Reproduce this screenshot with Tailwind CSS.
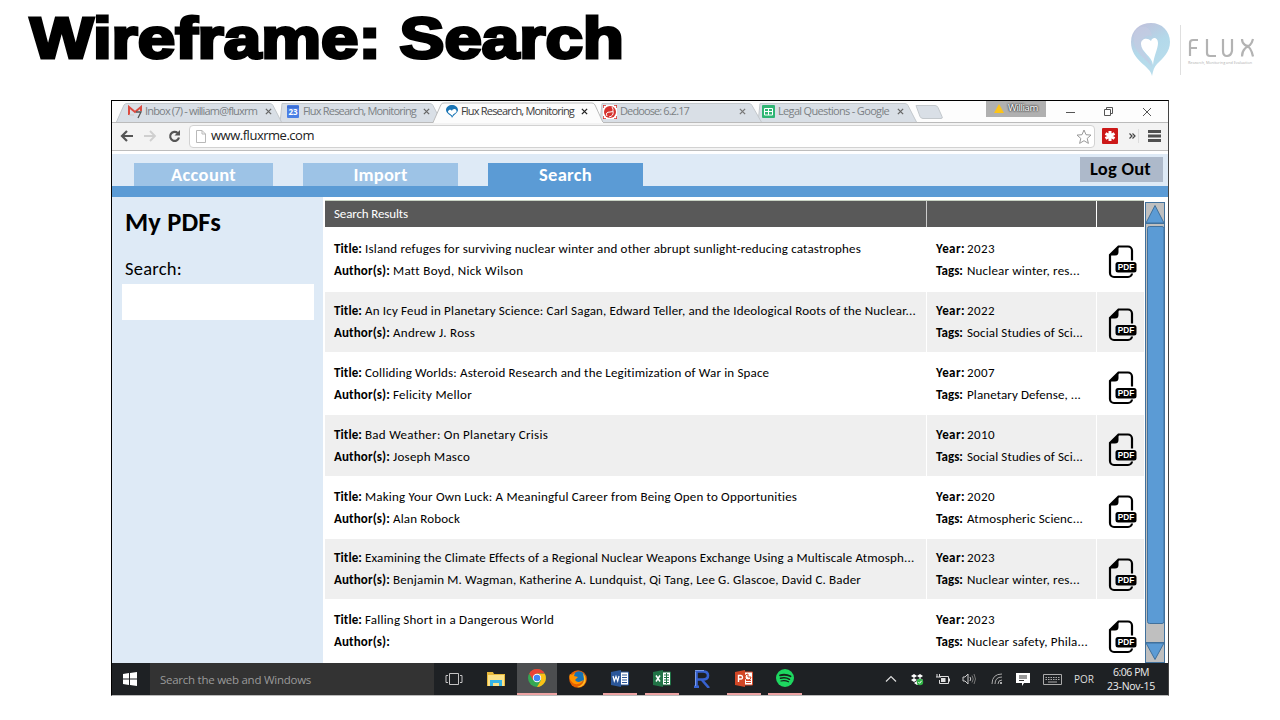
<!DOCTYPE html>
<html lang="en">
<head>
<meta charset="utf-8">
<title>Wireframe: Search</title>
<script src="https://cdn.jsdelivr.net/npm/@tailwindcss/browser@4"></script>
</head>
<body class="w-[1280px] h-[720px] overflow-hidden bg-white text-black font-[Carlito,Lato,sans-serif]">
<svg class="hidden">
  <symbol id="pdf" viewBox="0 0 30 34">
    <path d="M10.500 1.500H20a4 4 0 0 1 4 4V28a4 4 0 0 1-4 4H6a4 4 0 0 1-4-4V10z" fill="none" stroke="#000" stroke-width="2.200"/>
    <path d="M2 10.500L10.500 1.500V7a3.500 3.500 0 0 1-3.500 3.500z" fill="#000"/>
    <rect x="6.500" y="15.500" width="23" height="13" fill="var(--gap)"/>
    <rect x="7.500" y="17" width="21" height="10.500" rx="2.500" fill="#000"/>
    <text x="9.800" y="25.300" textLength="16.500" lengthAdjust="spacingAndGlyphs" font-family="Liberation Sans" font-weight="bold" font-size="8.500" fill="#fff">PDF</text>
  </symbol>
  <symbol id="x" viewBox="0 0 8 8"><path d="M1 1l6 6M7 1L1 7" stroke="currentColor" stroke-width="1.500"/></symbol>
</svg>

<header class="flex h-[100px] justify-between pl-[30px] pr-[24px]">
  <h1 class="h-20 w-[620px] origin-left scale-x-[1.17] text-[57.500px] leading-[77px] font-bold whitespace-nowrap font-['Liberation_Sans',sans-serif] [-webkit-text-stroke:3px_#000]">Wireframe: Search</h1>
  <div class="flex pt-[22px]">
    <svg width="126" height="56" viewBox="0 0 126 56">
      <defs><linearGradient id="lg" x1="0" y1="0" x2=".4" y2="1"><stop offset="0" stop-color="#c2bdd9"/><stop offset=".55" stop-color="#b3d9ea"/><stop offset="1" stop-color="#b9ddec"/></linearGradient></defs>
      <path d="M22 54C21 44 1 39 1 20 1 8 10 1 21 1s19 8 19 19c0 10-7 16-13 22-3 3-4 7-5 12z" fill="url(#lg)"/>
      <path d="M6 8C11 2 21 4 22 14c-5-2-10 1-11 8 0 8 9 13 11 23C17 37 5 32 4 20 3 15 4 11 6 8z" fill="#c5cbe2" opacity=".65"/>
      <path d="M23 43c-1-9-12-13-12-21 0-5 6-7 10-3 2-5 7-3 7 2 0 6-4 12-5 22z" fill="#fff"/>
      <path d="M50.500 3V53" stroke="#dfdfdf"/>
      <g fill="none" stroke="#b3b3b3" stroke-width="2.200"><path d="M60 34V21q0-3 3-3h5M60 26h7M77 17v14q0 3 3 3h6M93 17v12q0 5 4 5t5-5V17M112 17q0 4 3 6t5 0 3-6M112 34.500q0-5 3-8t5 0 3 8"/></g>
      <text x="58" y="41.500" textLength="64" font-family="Open Sans" font-size="3.800" fill="#b0b0b0">Research, Monitoring and Evaluation</text>
    </svg>
  </div>
</header>

<main class="ml-[111px] flex h-[596px] w-[1058px] flex-col border border-black border-r-[#444] border-b-[#bbb] bg-white">
  <!-- Browser tab strip -->
  <div class="relative h-[22px] shrink-0 text-[11px] text-[#7b7f84] font-['Open_Sans',sans-serif]">
    <svg class="absolute inset-0" width="1056" height="22">
      <rect width="1056" height="22" fill="#fdfdfd"/>
      <g fill="#d9dfe6" stroke="#c3c8cc" stroke-width="1">
        <path d="M646 22l2-19.500H793q2 0 3 2l9 17.500z"/>
        <path d="M488 22l2-19.500H637q2 0 3 2l10 17.500z"/>
        <path d="M168 22l2-19.500H318q2 0 3 2l9 17.500z"/>
        <path d="M4 22l8-18q1-1.500 3-1.500H158q2 0 3 2l9 17.500z"/>
        <path d="M804 4.500h19q2 0 3 2l4 9q1 2-1 2H811q-2 0-3-2z"/>
      </g>
      <path d="M0 21.500H321l8-18q1-1.500 3-1.500H480q2 0 3 2l8 17.500H1056" fill="#fcfcfc" stroke="#bbb"/>
      <path d="M322 22h169" stroke="#fcfcfc" stroke-width="2"/>
    </svg>
    <div class="relative flex h-[21px] items-center pl-4">
      <div class="flex w-[160px] items-center">
        <svg width="15" height="14" viewBox="0 0 15 14"><path d="M1 10V2l6 5 6-5v4" fill="none" stroke="#dc4b40" stroke-width="2"/><path d="M1 10h5" stroke="#c9c9c9"/><path d="M8 7h5l-3 6" fill="none" stroke="#555" stroke-width="1.300"/></svg>
        <span class="ml-0.5 w-[113px]"><span data-w="112">Inbox (7) - william@fluxrm</span></span>
        <svg class="ml-[7px] text-[#666]" width="7" height="7"><use href="#x"/></svg>
      </div>
      <div class="flex w-[158px] items-center">
        <svg class="-ml-px mr-px" width="12" height="13"><rect width="12" height="13" rx="1" fill="#4a7fe5"/><path d="M0 2h12" stroke="#2e5fc4"/><text x="1.500" y="10" font-size="8" font-weight="bold" font-family="Open Sans" textLength="9" fill="#fff">23</text></svg>
        <span class="ml-[3px] w-[113px]"><span data-w="113">Flux Research, Monitoring</span></span>
        <svg class="ml-[7px] text-[#666]" width="7" height="7"><use href="#x"/></svg>
      </div>
      <div class="flex w-[157px] items-center text-[#3b3b3b]">
        <svg width="12" height="13" viewBox="0 0 12 13"><path d="M6 13C6 10 0 9 0 5 0 2 3 0 6 0s6 2 6 5-5 5-6 8z" fill="#1a75b5"/><path d="M6.500 11C5 9 1.500 8 2 6.500 3 4 5 4.500 6 6c0-2 4-3 4.500 0C11 8 7 8 6.500 11z" fill="#fff"/></svg>
        <span class="ml-[3px] w-[113px]"><span data-w="113">Flux Research, Monitoring</span></span>
        <svg class="ml-[7px] text-[#222]" width="7" height="7"><use href="#x"/></svg>
      </div>
      <div class="flex w-[159px] items-center">
        <svg width="14" height="14" viewBox="0 0 14 14"><rect width="14" height="14" fill="#fff"/><circle cx="7" cy="7" r="6" fill="#d6322e"/><path d="M0 3V0h3M11 0h3v3M14 11v3h-3M3 14H0v-3" fill="none" stroke="#d6322e" stroke-width="1.500"/><path d="M4 11q-2-4 3-4T9 2M6 12q5-1 4-6" fill="none" stroke="#fff"/></svg>
        <span class="ml-[3px] w-[119px]"><span data-w="69">Dedoose: 6.2.17</span></span>
        <svg class="text-[#777]" width="7" height="7"><use href="#x"/></svg>
      </div>
      <div class="flex w-[224px] items-center">
        <svg width="13" height="13"><rect width="13" height="13" rx="1" fill="#2fb573"/><path d="M2.500 3.500h8v6.500h-8zM2.500 6.500h8M6.500 3.500v6.500" fill="none" stroke="#fff"/></svg>
        <span class="ml-[3px] w-[112px]"><span data-w="111">Legal Questions - Google</span></span>
        <svg class="ml-[7px] text-[#666]" width="7" height="7"><use href="#x"/></svg>
      </div>
      <div class="-mt-[6px] flex h-4 w-[60px] items-center bg-[#b0b0b0] pl-2 text-[9.500px] text-white [text-shadow:0_0_2px_#222,0_0_2px_#222]">
        <svg width="10" height="9"><path d="M5 0l5 9H0z" fill="#fcc419"/></svg>
        <span class="ml-1"><span data-w="30">William</span></span>
      </div>
      <svg class="ml-5" width="90" height="12" viewBox="0 0 90 12" fill="none" stroke="#555"><path d="M0 6.500h9M38.500 3.500h6v6h-6zM40.500 3.500v-2h6v6h-2M77 2l8 8M85 2l-8 8"/></svg>
    </div>
  </div>
  <!-- Address bar -->
  <div class="flex h-[28px] shrink-0 items-center border-b border-[#bdbdbd] bg-[#f3f3f3] pb-px pl-2">
    <svg width="62" height="14" viewBox="0 0 62 14" fill="none" stroke-width="2.200"><path d="M13 7H2M7 2L2 7l5 5" stroke="#555"/><path d="M24 7h11M30 2l5 5-5 5" stroke="#cfcfcf" stroke-width="1.800"/><path d="M59 8.500a4.500 4.500 0 1 1-1.300-4.500" stroke="#555"/><path d="M60 1v5.500h-5.500z" fill="#555"/></svg>
    <div class="ml-[7px] flex h-[23px] w-[906px] items-center rounded-sm border border-[#d2d2d2] bg-white pl-[6px]">
      <svg width="10" height="13" fill="none" stroke="#b9b9b9"><path d="M.5.5h5.500l3.500 3.500v8.500h-9zM6 .5V4h3.500"/></svg>
      <span class="ml-[5px] w-[865px] text-[13px] text-[#222] font-['Open_Sans',sans-serif]"><span data-w="103">www.fluxrme.com</span></span>
      <svg class="shrink-0" width="16" height="15" viewBox="0 0 16 15" fill="none" stroke="#999"><path d="M8 1l2 4.700 5 .4-3.800 3.300 1.200 5L8 11.700l-4.400 2.700 1.200-5L1 6.100l5-.4z"/></svg>
    </div>
    <svg class="ml-[7px]" width="62" height="16" viewBox="0 0 62 16"><rect width="16" height="16" rx="1" fill="#cc1818"/><path d="M8 3v10M3.500 5.500l9 5M12.500 5.500l-9 5" stroke="#fff" stroke-width="3"/><path d="M27.500 5.500L30 8l-2.500 2.500M30.500 5.500L33 8 30.500 10.500" fill="none" stroke="#444" stroke-width="1.200"/><path d="M36.500 1v14" stroke="#ddd"/><path d="M46 3.500h13M46 8h13M46 12.500h13" stroke="#505050" stroke-width="2.800"/></svg>
  </div>
  <!-- Site navigation -->
  <nav class="mt-[3px] flex h-[43px] shrink-0 items-start border-b-[11px] border-[#5b9bd5] bg-[#deeaf6] text-[18.500px] leading-[23px] font-bold text-white">
    <div class="mt-[9px] ml-[22px] h-[23px] w-[139px] bg-[#9dc3e6] text-center"><span data-w="65">Account</span></div>
    <div class="mt-[9px] ml-[30px] h-[23px] w-[155px] bg-[#9dc3e6] text-center"><span data-w="54">Import</span></div>
    <div class="mt-[9px] ml-[30px] h-[23px] w-[155px] bg-[#5b9bd5] text-center"><span data-w="53">Search</span></div>
    <div class="mt-[3px] ml-auto mr-[5px] h-[25px] w-[83px] bg-[#adb9ca] pr-0.5 text-center text-black"><span data-w="61">Log Out</span></div>
  </nav>
  <!-- Page body -->
  <div class="flex h-[466px] shrink-0">
    <aside class="w-[211px] bg-[#deeaf6] px-[10px]">
      <h2 class="ml-[3px] mt-[9px] h-8 text-[26.500px] leading-[32px] font-bold"><span data-w="96">My PDFs</span></h2>
      <p class="ml-[3px] mt-[20px] h-6 text-[18.500px] leading-[22px]"><span data-w="57">Search:</span></p>
      <div class="mt-[2px] h-9 w-[192px] bg-white"></div>
    </aside>
    <section class="ml-0.5 w-[819px] pt-[3px] text-[13px] leading-[22px]">
      <div class="grid h-[27px] grid-cols-[602px_170px_47px] border-t border-[#c9d3c4] bg-[#595959] text-white">
        <div class="border-r border-[#ccc] pl-[9px] pt-0.5"><span data-w="74">Search Results</span></div>
        <div class="border-r border-white"></div>
        <div></div>
      </div>
      <div class="grid h-[65px] grid-cols-[602px_170px_47px] [--gap:#fff]">
        <div class="flex flex-col justify-center pl-[9px]">
          <p class="flex gap-[3px]"><b class="w-[28px]"><span data-w="28">Title:</span></b><span data-w="496">Island refuges for surviving nuclear winter and other abrupt sunlight-reducing catastrophes</span></p>
          <p class="flex gap-[3px]"><b class="w-[56px]"><span data-w="56">Author(s):</span></b><span data-w="130">Matt Boyd, Nick Wilson</span></p>
        </div>
        <div class="flex flex-col justify-center pl-[9px]">
          <p class="flex gap-[3px]"><b class="w-[28px]"><span data-w="29">Year:</span></b><span data-w="28">2023</span></p>
          <p class="flex gap-[3px]"><b class="w-[28px]"><span data-w="27">Tags:</span></b><span data-w="113">Nuclear winter, res...</span></p>
        </div>
        <div class="flex items-center pl-[11px] pt-[5px]"><svg width="30" height="34"><use href="#pdf"/></svg></div>
      </div>
      <div class="grid h-[61px] grid-cols-[602px_170px_47px] border-b border-white bg-[#efefef] [--gap:#efefef]">
        <div class="flex flex-col justify-center border-r border-white pl-[9px]">
          <p class="flex gap-[3px]"><b class="w-[28px]"><span data-w="28">Title:</span></b><span data-w="551">An Icy Feud in Planetary Science: Carl Sagan, Edward Teller, and the Ideological Roots of the Nuclear...</span></p>
          <p class="flex gap-[3px]"><b class="w-[56px]"><span data-w="56">Author(s):</span></b><span data-w="82">Andrew J. Ross</span></p>
        </div>
        <div class="flex flex-col justify-center border-r border-white pl-[9px]">
          <p class="flex gap-[3px]"><b class="w-[28px]"><span data-w="29">Year:</span></b><span data-w="28">2022</span></p>
          <p class="flex gap-[3px]"><b class="w-[28px]"><span data-w="27">Tags:</span></b><span data-w="116">Social Studies of Sci...</span></p>
        </div>
        <div class="flex items-center pl-[11px] pt-[5px]"><svg width="30" height="34"><use href="#pdf"/></svg></div>
      </div>
      <div class="grid h-[62px] grid-cols-[602px_170px_47px] [--gap:#fff]">
        <div class="flex flex-col justify-center pl-[9px]">
          <p class="flex gap-[3px]"><b class="w-[28px]"><span data-w="28">Title:</span></b><span data-w="404">Colliding Worlds: Asteroid Research and the Legitimization of War in Space</span></p>
          <p class="flex gap-[3px]"><b class="w-[56px]"><span data-w="56">Author(s):</span></b><span data-w="79">Felicity Mellor</span></p>
        </div>
        <div class="flex flex-col justify-center pl-[9px]">
          <p class="flex gap-[3px]"><b class="w-[28px]"><span data-w="29">Year:</span></b><span data-w="28">2007</span></p>
          <p class="flex gap-[3px]"><b class="w-[28px]"><span data-w="27">Tags:</span></b><span data-w="114">Planetary Defense, ...</span></p>
        </div>
        <div class="flex items-center pl-[11px] pt-[7px]"><svg width="30" height="34"><use href="#pdf"/></svg></div>
      </div>
      <div class="grid h-[62px] grid-cols-[602px_170px_47px] border-b border-white bg-[#efefef] [--gap:#efefef]">
        <div class="flex flex-col justify-center border-r border-white pl-[9px]">
          <p class="flex gap-[3px]"><b class="w-[28px]"><span data-w="28">Title:</span></b><span data-w="183">Bad Weather: On Planetary Crisis</span></p>
          <p class="flex gap-[3px]"><b class="w-[56px]"><span data-w="56">Author(s):</span></b><span data-w="77">Joseph Masco</span></p>
        </div>
        <div class="flex flex-col justify-center border-r border-white pl-[9px]">
          <p class="flex gap-[3px]"><b class="w-[28px]"><span data-w="29">Year:</span></b><span data-w="28">2010</span></p>
          <p class="flex gap-[3px]"><b class="w-[28px]"><span data-w="27">Tags:</span></b><span data-w="116">Social Studies of Sci...</span></p>
        </div>
        <div class="flex items-center pl-[11px] pt-[8px]"><svg width="30" height="34"><use href="#pdf"/></svg></div>
      </div>
      <div class="grid h-[62px] grid-cols-[602px_170px_47px] [--gap:#fff]">
        <div class="flex flex-col justify-center pl-[9px]">
          <p class="flex gap-[3px]"><b class="w-[28px]"><span data-w="28">Title:</span></b><span data-w="432">Making Your Own Luck: A Meaningful Career from Being Open to Opportunities</span></p>
          <p class="flex gap-[3px]"><b class="w-[56px]"><span data-w="56">Author(s):</span></b><span data-w="67">Alan Robock</span></p>
        </div>
        <div class="flex flex-col justify-center pl-[9px]">
          <p class="flex gap-[3px]"><b class="w-[28px]"><span data-w="29">Year:</span></b><span data-w="28">2020</span></p>
          <p class="flex gap-[3px]"><b class="w-[28px]"><span data-w="27">Tags:</span></b><span data-w="116">Atmospheric Scienc...</span></p>
        </div>
        <div class="flex items-center pl-[11px] pt-[8px]"><svg width="30" height="34"><use href="#pdf"/></svg></div>
      </div>
      <div class="grid h-[61px] grid-cols-[602px_170px_47px] border-b border-white bg-[#efefef] [--gap:#efefef]">
        <div class="flex flex-col justify-center border-r border-white pl-[9px]">
          <p class="flex gap-[3px]"><b class="w-[28px]"><span data-w="28">Title:</span></b><span data-w="549">Examining the Climate Effects of a Regional Nuclear Weapons Exchange Using a Multiscale Atmosph...</span></p>
          <p class="flex gap-[3px]"><b class="w-[56px]"><span data-w="56">Author(s):</span></b><span data-w="468">Benjamin M. Wagman, Katherine A. Lundquist, Qi Tang, Lee G. Glascoe, David C. Bader</span></p>
        </div>
        <div class="flex flex-col justify-center border-r border-white pl-[9px]">
          <p class="flex gap-[3px]"><b class="w-[28px]"><span data-w="29">Year:</span></b><span data-w="28">2023</span></p>
          <p class="flex gap-[3px]"><b class="w-[28px]"><span data-w="27">Tags:</span></b><span data-w="113">Nuclear winter, res...</span></p>
        </div>
        <div class="flex items-center pl-[11px] pt-[11px]"><svg width="30" height="34"><use href="#pdf"/></svg></div>
      </div>
      <div class="grid h-[62px] grid-cols-[602px_170px_47px] [--gap:#fff]">
        <div class="flex flex-col justify-center pl-[9px]">
          <p class="flex gap-[3px]"><b class="w-[28px]"><span data-w="28">Title:</span></b><span data-w="189">Falling Short in a Dangerous World</span></p>
          <p class="flex gap-[3px]"><b class="w-[56px]"><span data-w="56">Author(s):</span></b></p>
        </div>
        <div class="flex flex-col justify-center pl-[9px]">
          <p class="flex gap-[3px]"><b class="w-[28px]"><span data-w="29">Year:</span></b><span data-w="28">2023</span></p>
          <p class="flex gap-[3px]"><b class="w-[28px]"><span data-w="27">Tags:</span></b><span data-w="121">Nuclear safety, Phila...</span></p>
        </div>
        <div class="flex items-center pl-[11px] pt-[11px]"><svg width="30" height="34"><use href="#pdf"/></svg></div>
      </div>
    </section>
    <svg class="mt-[5px] ml-[1px]" width="20" height="461" viewBox="0 0 20 461" fill="#5b9bd5" stroke="#41719c">
      <rect x=".5" y=".5" width="19" height="460" fill="#bfbfbf"/>
      <path d="M10 3.500l9 17.500H1zM.5 21.500h19"/>
      <rect x="2.500" y="24.500" width="16.500" height="397" rx="2"/>
      <path d="M.5 440.500h19M1 441h18l-9 16.500z"/>
    </svg>
  </div>
  <!-- Taskbar -->
  <footer class="flex h-[32px] shrink-0 items-center bg-[#1e2124] text-[#ddd] font-['Open_Sans',sans-serif]">
    <div class="flex w-[38px] justify-center pr-0.5"><svg width="14" height="14" fill="#fff"><path d="M0 2l6-1v5.500H0zM7 .9L14 0v6.500H7zM0 7.500h6V13l-6-1zM7 7.500h7V14l-7-.9z"/></svg></div>
    <div class="h-full w-[284px] bg-[#333] pl-[10px] text-[11.500px] leading-[33px] text-[#9a9a9a]"><span data-w="151">Search the web and Windows</span></div>
    <svg class="ml-[11px]" width="18" height="12" fill="none" stroke="#c4c4c4"><path d="M4.500.5h9v11h-9zM3 2.500H1v7h2M15 2.500h2v7h-2"/></svg>
    <svg class="ml-[24px]" width="18" height="16"><path d="M0 1h6l1 2h11v12H0z" fill="#e8b93b"/><path d="M1 4h16v11H1z" fill="#fbe28a"/><path d="M3 15V9h12v6h-3v-3H6v3z" fill="#36b4e5"/></svg>
    <div class="ml-[12px] flex h-full w-[40px] items-center justify-center border-b-2 border-[#eda3a3] bg-[#4c4e50]">
      <svg width="18" height="18" viewBox="0 0 18 18"><circle cx="9" cy="9" r="9" fill="#34a853"/><path d="M1.200 4.500A9 9 0 0 1 16.800 4.500H9L5 11z" fill="#ea4335"/><path d="M9 18A9 9 0 0 0 16.800 4.700H9l4 6.500z" fill="#fbc116"/><circle cx="9" cy="9" r="4.200" fill="#fff"/><circle cx="9" cy="9" r="3.300" fill="#4285f4"/></svg>
    </div>
    <svg class="ml-[12px]" width="18" height="18" viewBox="0 0 18 18"><circle cx="9" cy="9" r="8.800" fill="#e66000"/><circle cx="10" cy="7" r="5.800" fill="#1773b8"/><path d="M1 4l2 1 3-2-1 3 4 1-3 3c2 3 6 2 8 0-1 4-8 6-11 2C0 9 0 6 1 4z" fill="#ff9500"/><path d="M14 3q4 5 2 10-3 5-8 4 7-2 7-8z" fill="#ffbf26"/></svg>
    <div class="ml-[16px] flex h-full w-[34px] items-center justify-center border-b-2 border-[#eda3a3]"><svg width="18" height="17" viewBox="0 0 18 17"><path d="M9 2h8.500v13H9z" fill="#fff" stroke="#2b579a"/><path d="M11 5h5M11 7.500h5M11 10h5M11 12.500h5" stroke="#2b579a"/><path d="M0 2l10-2v17L0 15z" fill="#2b579a"/><path d="M2 6l1.300 5L5 6.500 6.700 11 8 6" fill="none" stroke="#fff" stroke-width="1.200"/></svg></div>
    <div class="ml-[8px] flex h-full w-[34px] items-center justify-center border-b-2 border-[#eda3a3]"><svg width="18" height="17" viewBox="0 0 18 17"><path d="M9 2h8.500v13H9z" fill="#fff" stroke="#217346"/><path d="M11 5h5M11 7.500h5M11 10h5M11 12.500h5M13.500 3v11" stroke="#217346"/><path d="M0 2l10-2v17L0 15z" fill="#217346"/><path d="M3 5.500l4 6M7 5.500l-4 6" stroke="#fff" stroke-width="1.500"/></svg></div>
    <svg class="ml-[14px]" width="18" height="18" viewBox="0 0 18 18" fill="none" stroke="#3762d0" stroke-width="2.600"><path d="M3.500 18V1.500H10q5 0 5 4t-5 4H4M9 10L16 18M1 16.700h5"/><path d="M2.500 16V1.500M2 .5H11" stroke="#8fb0f5" stroke-width=".8"/></svg>
    <div class="ml-[16px] flex h-full w-[34px] items-center justify-center border-b-2 border-[#eda3a3]"><svg width="18" height="17" viewBox="0 0 18 17"><path d="M9 2h8.500v13H9z" fill="#fff" stroke="#d24726"/><path d="M11 10.500h5M11 12.500h5M13 4v3h3a3 3 0 1 1-3-3" fill="none" stroke="#d24726"/><path d="M0 2l10-2v17L0 15z" fill="#d24726"/><path d="M3.500 12V5.500H6q1.500 0 1.500 1.800T6 9H3.500" fill="none" stroke="#fff" stroke-width="1.400"/></svg></div>
    <div class="ml-[7px] flex h-full w-[34px] items-center justify-center border-b-2 border-[#eda3a3]"><svg width="18" height="18" viewBox="0 0 18 18" fill="none" stroke="#15221a" stroke-linecap="round"><circle cx="9" cy="9" r="9" fill="#1ed760" stroke="none"/><path d="M4 6.300q5.500-1.500 10.500 1" stroke-width="1.800"/><path d="M4.500 9.300q5-1.300 9 1" stroke-width="1.500"/><path d="M5 12q4-1 7.500.8" stroke-width="1.200"/></svg></div>
    <svg class="ml-[83px]" width="12" height="8" fill="none" stroke="#ddd" stroke-width="1.200"><path d="M1 6.500l5-5 5 5"/></svg>
    <svg class="ml-[14px]" width="13" height="13"><path d="M3 1l3 2-3 2-3-2zM9 1l3 2-3 2-3-2zM3 5l3 2-3 2-3-2zM9 5l3 2-3 2-3-2zM6 8l3 2-3 2-3-2z" fill="#fff"/><circle cx="9" cy="9" r="3.200" fill="#2fb344"/><path d="M7.300 9l1.300 1.300 2-2.500" fill="none" stroke="#fff"/></svg>
    <svg class="ml-[12px]" width="14" height="11" fill="none" stroke="#ddd"><path d="M4 2.500h8.500v7H3.500V6M13.500 4.500v3M1 0v3M3.500 0v3M0 3h5"/><path d="M5 4h4.500v4H5z" fill="#ddd" stroke="none"/></svg>
    <svg class="ml-[12px]" width="14" height="12" fill="none" stroke="#ccc"><path d="M1 4h2l3-3v10L3 8H1z"/><path d="M8 4q1.500 2 0 4"/><path d="M10 2.500q2.500 3.500 0 7M12 1q3 5 0 10" stroke="#777"/></svg>
    <svg class="ml-[15px]" width="12" height="12" fill="none" stroke="#aaa"><path d="M1 11Q1 1 11 1M4 11q0-7 7-7M7 11q0-4 4-4"/><circle cx="10" cy="10" r="1" fill="#ddd" stroke="none"/></svg>
    <svg class="ml-[13px]" width="14" height="13"><path d="M0 0h14v10H8l-2 3v-3H0z" fill="#fff"/><path d="M3 3h8M3 5h8M3 7.500h5" stroke="#333"/></svg>
    <svg class="ml-[13px]" width="19" height="11" fill="none" stroke="#aaa"><path d="M.5.5h18v10H.5z"/><path d="M2.500 3.500h14M2.500 5.500h14" stroke-dasharray="1.500 1"/><path d="M5 8h9"/></svg>
    <span class="ml-[12px] w-[20px] text-[10px]"><span data-w="20">POR</span></span>
    <div class="ml-[12px] w-[50px] text-center text-[10.500px] leading-[14px] text-[#eee]"><p><span data-w="36">6:06 PM</span></p><p><span data-w="48">23-Nov-15</span></p></div>
  </footer>
</main>
<script>
// Spread each label so that it fills the width given in data-w
function fit() {
  document.querySelectorAll('[data-w]').forEach(function (el) {
    el.style.display = 'inline-block';
    el.style.whiteSpace = 'nowrap';
    el.style.flexShrink = '0';
    el.style.letterSpacing = '0px';
    var w = el.getBoundingClientRect().width;
    el.style.letterSpacing = ((+el.dataset.w - w) / el.textContent.length) + 'px';
  });
}
fit();
window.addEventListener('load', fit);
document.fonts.ready.then(fit);
setTimeout(fit, 60);
</script>
</body>
</html>
